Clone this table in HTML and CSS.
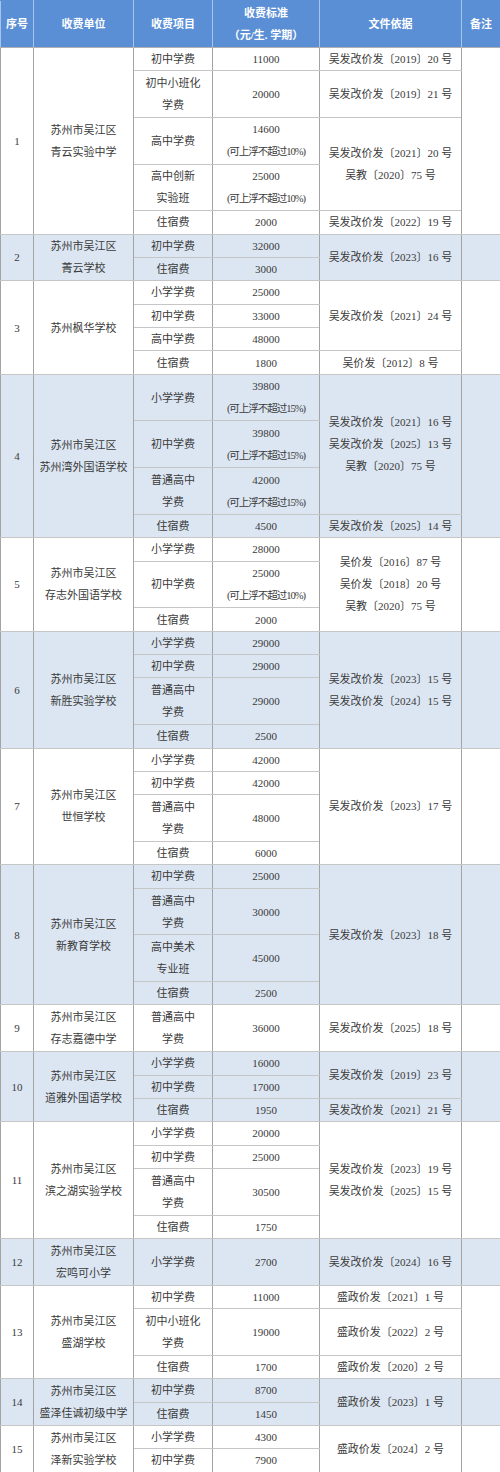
FILE: index.html
```html
<!DOCTYPE html>
<html lang="zh-CN">
<head>
<meta charset="utf-8">
<title>收费标准</title>
<link rel="stylesheet" href="styles.css">
</head>
<body>
<table class="fee-table">
  <colgroup>
    <col class="c-no"><col class="c-unit"><col class="c-item"><col class="c-std"><col class="c-doc"><col class="c-note">
  </colgroup>
  <thead>
    <tr class="h2">
      <th>序号</th><th>收费单位</th><th>收费项目</th><th>收费标准<br>（元/生. 学期）</th><th>文件依据</th><th>备注</th>
    </tr>
  </thead>
  <tbody>
    <!-- 1 -->
    <tr class="h1">
      <td rowspan="5">1</td><td rowspan="5">苏州市吴江区<br>青云实验中学</td>
      <td>初中学费</td><td>11000</td><td>吴发改价发〔2019〕20 号</td><td rowspan="5"></td>
    </tr>
    <tr class="h2"><td>初中小班化<br>学费</td><td>20000</td><td>吴发改价发〔2019〕21 号</td></tr>
    <tr class="h2"><td>高中学费</td><td>14600<br><span class="float">(可上浮不超过10%)</span></td><td rowspan="2">吴发改价发〔2021〕20 号<br>吴教〔2020〕75 号</td></tr>
    <tr class="h2"><td>高中创新<br>实验班</td><td>25000<br><span class="float">(可上浮不超过10%)</span></td></tr>
    <tr class="h1"><td>住宿费</td><td>2000</td><td>吴发改价发〔2022〕19 号</td></tr>

    <!-- 2 -->
    <tr class="h1 shade">
      <td rowspan="2">2</td><td rowspan="2">苏州市吴江区<br>菁云学校</td>
      <td>初中学费</td><td>32000</td><td rowspan="2">吴发改价发〔2023〕16 号</td><td rowspan="2"></td>
    </tr>
    <tr class="h1 shade"><td>住宿费</td><td>3000</td></tr>

    <!-- 3 -->
    <tr class="h1">
      <td rowspan="4">3</td><td rowspan="4">苏州枫华学校</td>
      <td>小学学费</td><td>25000</td><td rowspan="3">吴发改价发〔2021〕24 号</td><td rowspan="4"></td>
    </tr>
    <tr class="h1"><td>初中学费</td><td>33000</td></tr>
    <tr class="h1"><td>高中学费</td><td>48000</td></tr>
    <tr class="h1"><td>住宿费</td><td>1800</td><td>吴价发〔2012〕8 号</td></tr>

    <!-- 4 -->
    <tr class="h2 shade">
      <td rowspan="4">4</td><td rowspan="4">苏州市吴江区<br>苏州湾外国语学校</td>
      <td>小学学费</td><td>39800<br><span class="float">(可上浮不超过15%)</span></td>
      <td rowspan="3">吴发改价发〔2021〕16 号<br>吴发改价发〔2025〕13 号<br>吴教〔2020〕75 号</td><td rowspan="4"></td>
    </tr>
    <tr class="h2 shade"><td>初中学费</td><td>39800<br><span class="float">(可上浮不超过15%)</span></td></tr>
    <tr class="h2 shade"><td>普通高中<br>学费</td><td>42000<br><span class="float">(可上浮不超过15%)</span></td></tr>
    <tr class="h1 shade"><td>住宿费</td><td>4500</td><td>吴发改价发〔2025〕14 号</td></tr>

    <!-- 5 -->
    <tr class="h1">
      <td rowspan="3">5</td><td rowspan="3">苏州市吴江区<br>存志外国语学校</td>
      <td>小学学费</td><td>28000</td>
      <td rowspan="3">吴价发〔2016〕87 号<br>吴价发〔2018〕20 号<br>吴教〔2020〕75 号</td><td rowspan="3"></td>
    </tr>
    <tr class="h2"><td>初中学费</td><td>25000<br><span class="float">(可上浮不超过10%)</span></td></tr>
    <tr class="h1"><td>住宿费</td><td>2000</td></tr>

    <!-- 6 -->
    <tr class="h1 shade">
      <td rowspan="4">6</td><td rowspan="4">苏州市吴江区<br>新胜实验学校</td>
      <td>小学学费</td><td>29000</td>
      <td rowspan="4">吴发改价发〔2023〕15 号<br>吴发改价发〔2024〕15 号</td><td rowspan="4"></td>
    </tr>
    <tr class="h1 shade"><td>初中学费</td><td>29000</td></tr>
    <tr class="h2 shade"><td>普通高中<br>学费</td><td>29000</td></tr>
    <tr class="h1 shade"><td>住宿费</td><td>2500</td></tr>

    <!-- 7 -->
    <tr class="h1">
      <td rowspan="4">7</td><td rowspan="4">苏州市吴江区<br>世恒学校</td>
      <td>小学学费</td><td>42000</td>
      <td rowspan="4">吴发改价发〔2023〕17 号</td><td rowspan="4"></td>
    </tr>
    <tr class="h1"><td>初中学费</td><td>42000</td></tr>
    <tr class="h2"><td>普通高中<br>学费</td><td>48000</td></tr>
    <tr class="h1"><td>住宿费</td><td>6000</td></tr>

    <!-- 8 -->
    <tr class="h1 shade">
      <td rowspan="4">8</td><td rowspan="4">苏州市吴江区<br>新教育学校</td>
      <td>初中学费</td><td>25000</td>
      <td rowspan="4">吴发改价发〔2023〕18 号</td><td rowspan="4"></td>
    </tr>
    <tr class="h2 shade"><td>普通高中<br>学费</td><td>30000</td></tr>
    <tr class="h2 shade"><td>高中美术<br>专业班</td><td>45000</td></tr>
    <tr class="h1 shade"><td>住宿费</td><td>2500</td></tr>

    <!-- 9 -->
    <tr class="h2">
      <td>9</td><td>苏州市吴江区<br>存志嘉德中学</td>
      <td>普通高中<br>学费</td><td>36000</td><td>吴发改价发〔2025〕18 号</td><td></td>
    </tr>

    <!-- 10 -->
    <tr class="h1 shade">
      <td rowspan="3">10</td><td rowspan="3">苏州市吴江区<br>道雅外国语学校</td>
      <td>小学学费</td><td>16000</td>
      <td rowspan="2">吴发改价发〔2019〕23 号</td><td rowspan="3"></td>
    </tr>
    <tr class="h1 shade"><td>初中学费</td><td>17000</td></tr>
    <tr class="h1 shade"><td>住宿费</td><td>1950</td><td>吴发改价发〔2021〕21 号</td></tr>

    <!-- 11 -->
    <tr class="h1">
      <td rowspan="4">11</td><td rowspan="4">苏州市吴江区<br>滨之湖实验学校</td>
      <td>小学学费</td><td>20000</td>
      <td rowspan="4">吴发改价发〔2023〕19 号<br>吴发改价发〔2025〕15 号</td><td rowspan="4"></td>
    </tr>
    <tr class="h1"><td>初中学费</td><td>25000</td></tr>
    <tr class="h2"><td>普通高中<br>学费</td><td>30500</td></tr>
    <tr class="h1"><td>住宿费</td><td>1750</td></tr>

    <!-- 12 -->
    <tr class="h2 shade">
      <td>12</td><td>苏州市吴江区<br>宏鸣可小学</td>
      <td>小学学费</td><td>2700</td><td>吴发改价发〔2024〕16 号</td><td></td>
    </tr>

    <!-- 13 -->
    <tr class="h1">
      <td rowspan="3">13</td><td rowspan="3">苏州市吴江区<br>盛湖学校</td>
      <td>初中学费</td><td>11000</td><td>盛政价发〔2021〕1 号</td><td rowspan="3"></td>
    </tr>
    <tr class="h2"><td>初中小班化<br>学费</td><td>19000</td><td>盛政价发〔2022〕2 号</td></tr>
    <tr class="h1"><td>住宿费</td><td>1700</td><td>盛政价发〔2020〕2 号</td></tr>

    <!-- 14 -->
    <tr class="h1 shade">
      <td rowspan="2">14</td><td rowspan="2">苏州市吴江区<br>盛泽佳诚初级中学</td>
      <td>初中学费</td><td>8700</td><td rowspan="2">盛政价发〔2023〕1 号</td><td rowspan="2"></td>
    </tr>
    <tr class="h1 shade"><td>住宿费</td><td>1450</td></tr>

    <!-- 15 -->
    <tr class="h1">
      <td rowspan="2">15</td><td rowspan="2">苏州市吴江区<br>泽新实验学校</td>
      <td>小学学费</td><td>4300</td><td rowspan="2">盛政价发〔2024〕2 号</td><td rowspan="2"></td>
    </tr>
    <tr class="h1"><td>初中学费</td><td>7900</td></tr>
  </tbody>
</table>
</body>
</html>
```

FILE: styles.css
```css
html, body {
  margin: 0;
  padding: 0;
  background: #ffffff;
}

body {
  width: 500px;
  font-family: "Liberation Serif", "Noto Sans CJK SC", serif;
  font-size: 11px;
  color: #3a3a3a;
}

.fee-table {
  width: 500px;
  border-collapse: collapse;
  table-layout: fixed;
}

.c-no { width: 33px; }
.c-unit { width: 100px; }
.c-item { width: 79px; }
.c-std { width: 107px; }
.c-doc { width: 142px; }
.c-note { width: 39px; }

.fee-table th,
.fee-table td {
  padding: 0;
  text-align: center;
  vertical-align: middle;
  line-height: 22px;
  border-top: 1px solid #c6c6c6;
  border-bottom: 1px solid #c6c6c6;
  border-left: 1px solid #a3a3a3;
  border-right: 1px solid #a3a3a3;
  white-space: nowrap;
}

.fee-table th {
  background: #5b8fd5;
  color: #ffffff;
  font-weight: bold;
  font-size: 11px;
  border-top: 1px solid #5b8fd5;
  border-left: 1px solid #a9c4ea;
  border-right: 1px solid #a9c4ea;
  border-bottom: 1px solid #b0b0b0;
}

.h1 { height: 23.365px; }
.h2 { height: 46.73px; }

.shade td {
  background: #dce6f2;
}

.float {
  font-size: 10.5px;
  letter-spacing: -1px;
}
```
